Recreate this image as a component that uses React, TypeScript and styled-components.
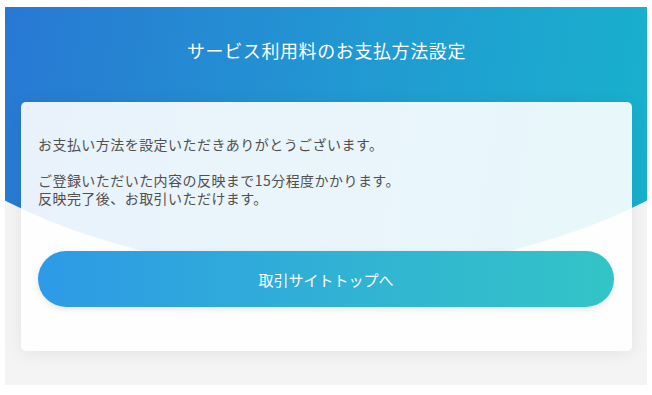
import React from "react";
import styled, { createGlobalStyle } from "styled-components";

const GlobalStyle = createGlobalStyle`
  html, body {
    margin: 0;
    padding: 0;
    background: #ffffff;
  }
  body {
    font-family: "Noto Sans CJK JP", "Noto Sans", "Liberation Sans", sans-serif;
  }
`;

const Page = styled.div`
  padding: 7px 5px 10px 5px;
`;

const Stage = styled.main`
  position: relative;
  background: #f4f4f4;
  padding: 30px 15px 34px 16px;
  overflow: hidden;
  isolation: isolate;

  &::before {
    content: "";
    position: absolute;
    inset: 0;
    z-index: -1;
    background: linear-gradient(100deg, #2878d3 0%, #219bd2 55%, #17b4cc 100%);
    clip-path: ellipse(500px 306px at 50% -41px);
  }
`;

const Title = styled.h1`
  margin: 0 0 39px;
  text-align: center;
  color: #ffffff;
  font-size: 18px;
  line-height: 26px;
  font-weight: 400;
  letter-spacing: 0.6px;
`;

const Card = styled.section`
  background: rgba(255, 255, 255, 0.9);
  border-radius: 5px;
  box-shadow: 0 2px 18px rgba(0, 0, 0, 0.07);
  padding: 33px 18px 44px 17px;
  display: flex;
  flex-direction: column;
`;

const Message = styled.p`
  margin: 0 0 18px;
  color: #505050;
  font-size: 14px;
  line-height: 18px;
  letter-spacing: 0.45px;

  &:last-of-type {
    margin-bottom: 44px;
  }
`;

const TopButton = styled.a`
  display: flex;
  align-items: center;
  justify-content: center;
  height: 56px;
  border-radius: 28px;
  background: linear-gradient(90deg, #2d9ae6 0%, #31b5d2 60%, #33c4c6 100%);
  box-shadow: 0 2px 6px rgba(0, 0, 0, 0.1);
  color: #ffffff;
  font-size: 15px;
  text-decoration: none;
  cursor: pointer;
`;

export default function App() {
  return (
    <>
      <GlobalStyle />
      <Page>
        <Stage>
          <Title>サービス利用料のお支払方法設定</Title>
          <Card>
            <Message>お支払い方法を設定いただきありがとうございます。</Message>
            <Message>
              ご登録いただいた内容の反映まで15分程度かかります。
              <br />
              反映完了後、お取引いただけます。
            </Message>
            <TopButton>取引サイトトップへ</TopButton>
          </Card>
        </Stage>
      </Page>
    </>
  );
}
